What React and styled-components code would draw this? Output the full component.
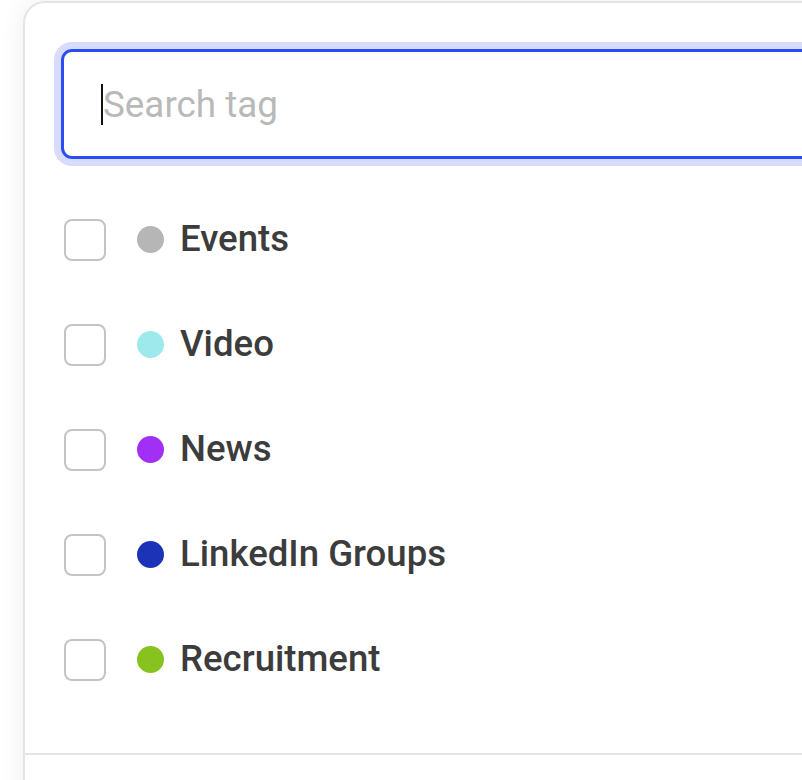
import React from "react";
import styled, { createGlobalStyle } from "styled-components";

const GlobalStyle = createGlobalStyle`
  html, body {
    margin: 0;
    padding: 0;
    background: #ffffff;
    overflow: hidden;
  }
  body {
    font-family: Roboto, "Noto Sans", Arial, sans-serif;
  }
  * {
    box-sizing: border-box;
  }
`;

const Page = styled.div`
  width: 802px;
  height: 780px;
  overflow: hidden;
  padding: 1px 0 0 23px;
`;

const Card = styled.div`
  width: 900px;
  height: 820px;
  background: #ffffff;
  border: 2px solid #e4e4e4;
  border-radius: 22px;
  box-shadow: 0 0 26px rgba(0, 0, 0, 0.07);
  display: flex;
  flex-direction: column;
`;

const CardBody = styled.div`
  padding: 46px 36px 41px 36px;
`;

const SearchWrap = styled.div`
  position: relative;
  height: 110px;
  border: 3px solid #2d4cf2;
  border-radius: 11px;
  box-shadow: 0 0 0 7px #d5dcfd;
  display: flex;
  align-items: center;
`;

const SearchInput = styled.input`
  width: 100%;
  height: 100%;
  border: none;
  outline: none;
  background: transparent;
  padding: 0 0 0 39px;
  font-family: Roboto, "Noto Sans", Arial, sans-serif;
  font-size: 36.8px;
  color: #3c3c3c;
  caret-color: transparent;

  &::placeholder {
    color: #b9b9b9;
  }
`;

// нарисованный курсор поверх поля
const Caret = styled.span`
  position: absolute;
  left: 37px;
  top: 32px;
  width: 2px;
  height: 41px;
  background: #111111;
`;

const TagList = styled.ul`
  list-style: none;
  margin: 28px 0 0 0;
  padding: 0 0 0 3px;
`;

const TagRow = styled.li`
  height: 105px;
  display: flex;
  align-items: center;
`;

const Checkbox = styled.span`
  width: 42px;
  height: 42px;
  border: 2px solid #c4c4c4;
  border-radius: 8px;
  flex-shrink: 0;
  margin-right: 31px;
`;

const Dot = styled.span`
  width: 27px;
  height: 27px;
  border-radius: 50%;
  background: ${(props) => props.$color};
  flex-shrink: 0;
  margin-right: 16px;
`;

const TagName = styled.span`
  font-size: 36.6px;
  font-weight: 500;
  color: #3c3c3c;
  line-height: 1;
`;

const CardFooter = styled.div`
  flex: 1;
  border-top: 2px solid #e4e4e4;
`;

const tags = [
  { name: "Events", color: "#b6b6b6" },
  { name: "Video", color: "#9de9ec" },
  { name: "News", color: "#a22ff6" },
  { name: "LinkedIn Groups", color: "#1c33b8" },
  { name: "Recruitment", color: "#87c21f" },
];

export default function App() {
  return (
    <>
      <GlobalStyle />
      <Page>
        <Card>
          <CardBody>
            <SearchWrap>
              <Caret />
              <SearchInput placeholder="Search tag" />
            </SearchWrap>
            <TagList>
              {tags.map((tag) => (
                <TagRow key={tag.name}>
                  <Checkbox />
                  <Dot $color={tag.color} />
                  <TagName>{tag.name}</TagName>
                </TagRow>
              ))}
            </TagList>
          </CardBody>
          <CardFooter />
        </Card>
      </Page>
    </>
  );
}
